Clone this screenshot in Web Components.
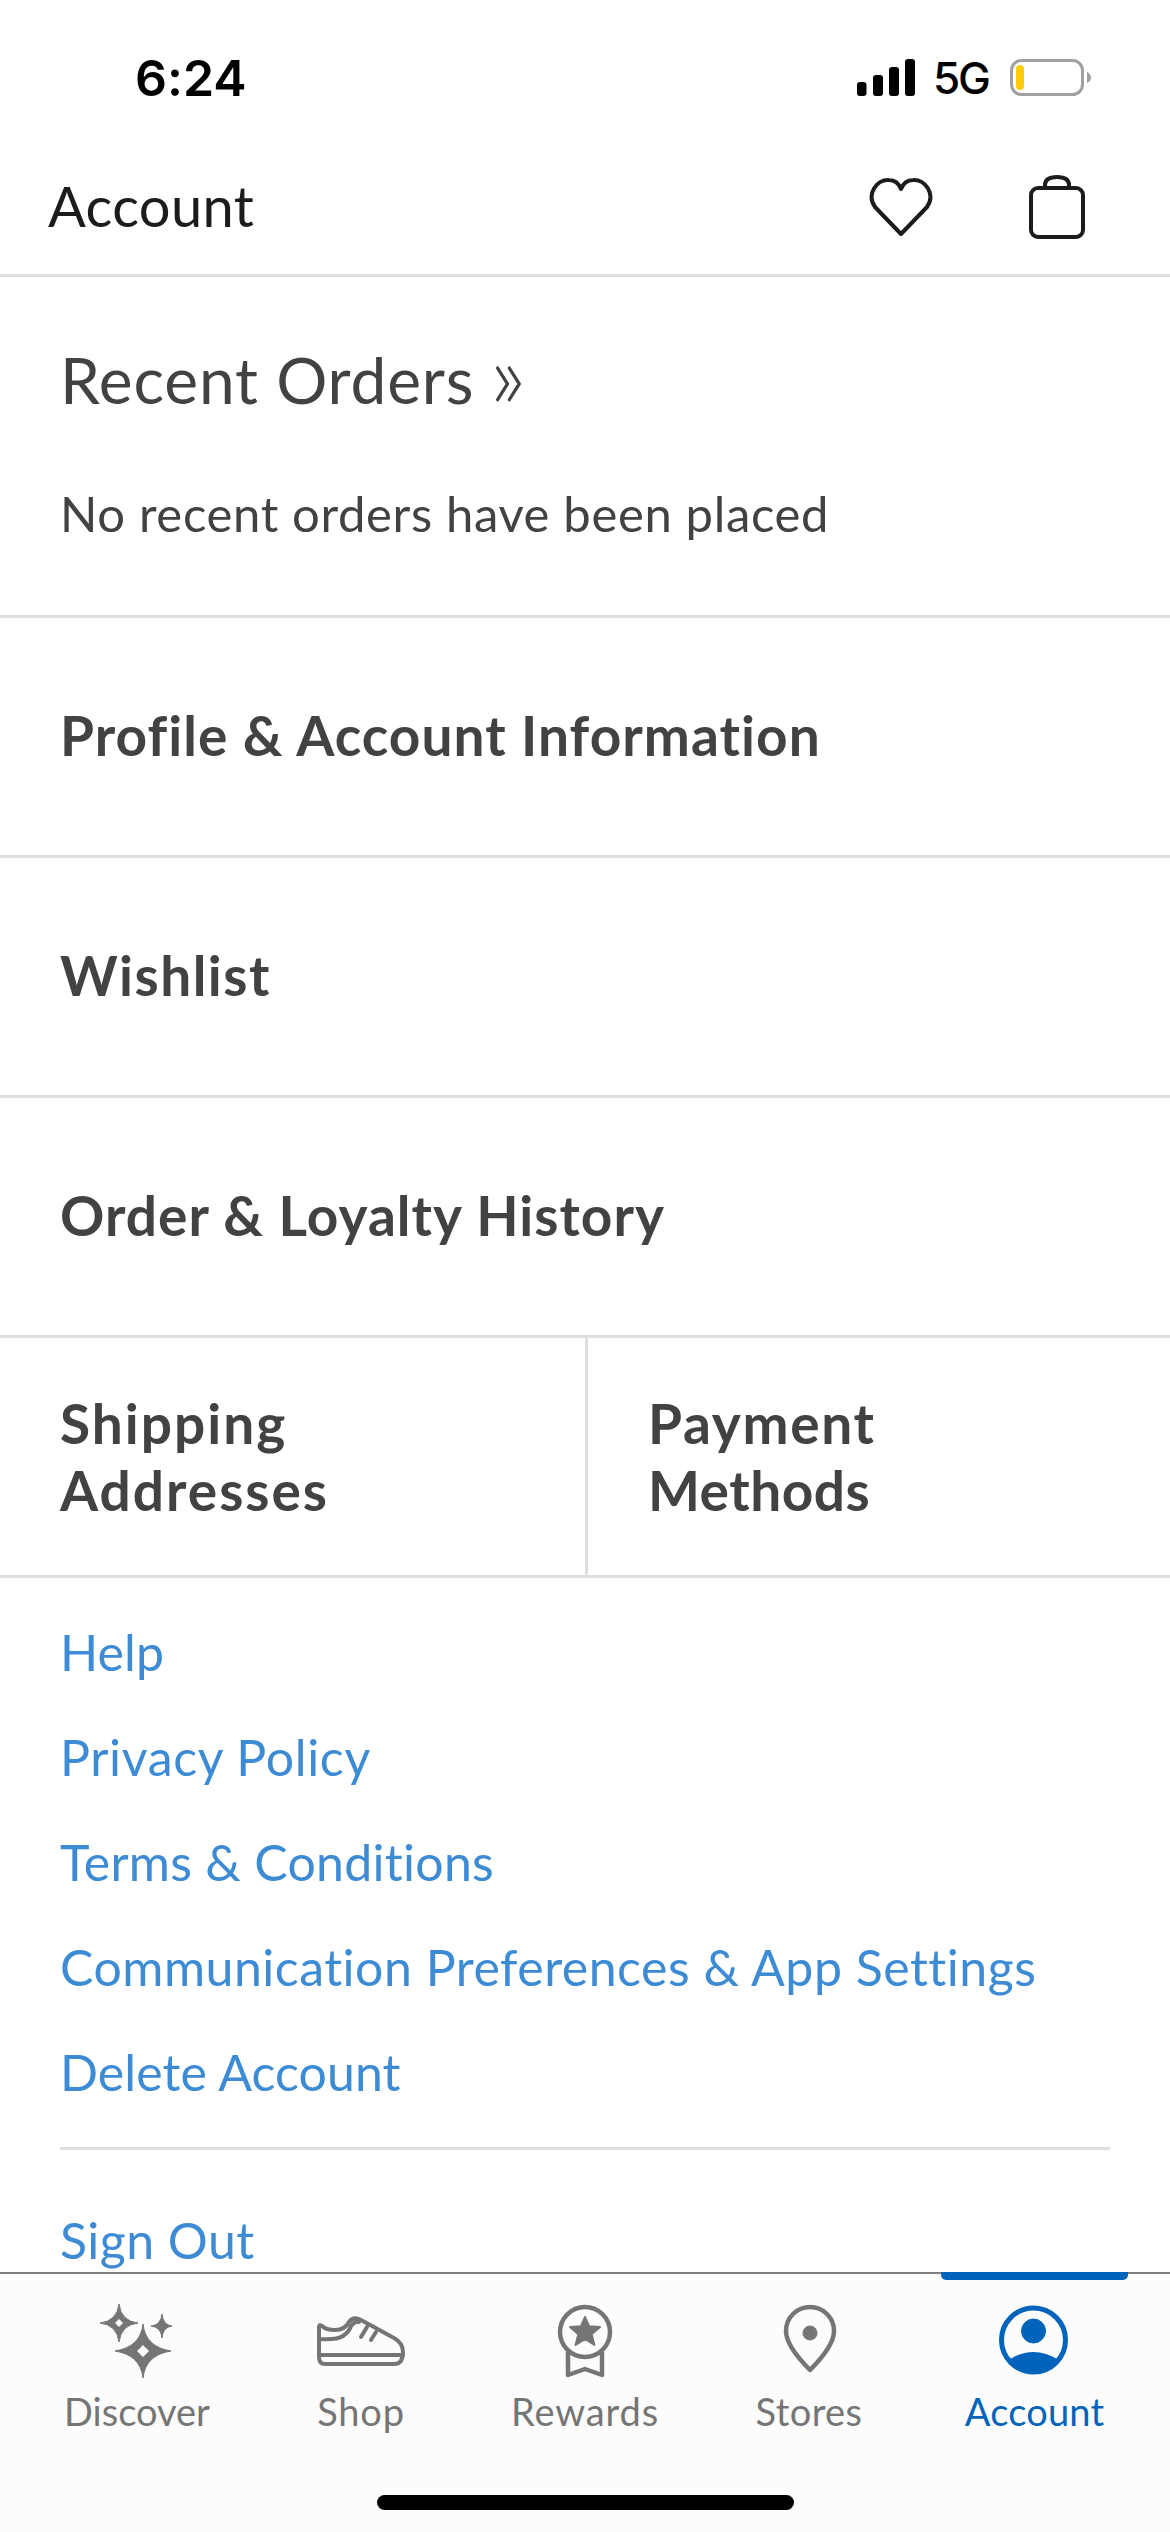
<!DOCTYPE html>
<html>
<head>
<meta charset="utf-8">
<title>Account</title>
<style>
    html, body { margin: 0; padding: 0; background: #fff; }
    body { width: 1170px; height: 2532px; overflow: hidden; font-family: Lato, "Noto Sans", sans-serif; font-variant-ligatures: none; color: #424242; }
</style>
</head>
<body>
<app-screen>
    <status-bar slot="top" time="6:24"></status-bar>
    <app-header slot="top" title="Account"></app-header>
    <recent-orders></recent-orders>
    <account-row>Profile &amp; Account Information</account-row>
    <account-row style="letter-spacing: 1.5px">Wishlist</account-row>
    <account-row>Order &amp; Loyalty History</account-row>
    <split-row>
        <span slot="left"><span style="letter-spacing: 2px">Shipping<br>Addresses</span></span>
        <span slot="right"><span style="letter-spacing: 1.7px">Payment</span><br><span style="letter-spacing: 0.5px">Methods</span></span>
    </split-row>
    <link-list>
        <a-link style="letter-spacing: 0.1px">Help</a-link>
        <a-link style="letter-spacing: 0.66px">Privacy Policy</a-link>
        <a-link style="letter-spacing: 0.28px">Terms &amp; Conditions</a-link>
        <a-link style="letter-spacing: 0.5px">Communication Preferences &amp; App Settings</a-link>
        <a-link style="letter-spacing: 0.1px">Delete Account</a-link>
        <a-link slot="after">Sign Out</a-link>
    </link-list>
    <tab-bar slot="bottom">
        <tab-item label="Discover" icon="discover" style="letter-spacing: 0"></tab-item>
        <tab-item label="Shop" icon="shop" style="letter-spacing: 0.8px"></tab-item>
        <tab-item label="Rewards" icon="rewards" style="letter-spacing: 0.9px"></tab-item>
        <tab-item label="Stores" icon="stores" style="letter-spacing: 0.4px"></tab-item>
        <tab-item label="Account" icon="account" active></tab-item>
    </tab-bar>
</app-screen>

<script>
(function () {

    const ICONS = {
        discover: '\
            <path d="M56 22Q58.500 45 84 49Q58.500 53 56 76Q53.500 53 28 49Q53.500 45 56 22Z"/>\
            <path d="M32 2Q34 19 51 21Q34 23 32 40Q30 23 13 21Q30 19 32 2Z"/>\
            <path d="M75 12Q76 23 85 24Q76 25 75 36Q74 25 64 24Q74 23 75 12Z"/>\
            <path fill="#fcfcfc" stroke="none" d="M56 43l6 6-6 6-6-6zM32 17l4 4-4 4-4-4z"/>',
        shop: '\
            <g fill="none" stroke-width="4" stroke-linecap="round" stroke-linejoin="round">\
            <path d="M8 25V55Q8 62 14 62H83Q92 62 92 50Q92 41 83 36L50 18Q42 14 38 20Q34 28 24 28Q15 28 11 24Q8 22 8 25Z"/>\
            <path d="M8 37Q26 38 32 34Q38 30 40 24Q44 19 48 20"/>\
            <path d="M8 53H92M50 35L56 25M60 38L65 30"/>\
            </g>',
        rewards: '\
            <g fill="none" stroke-width="4.500" stroke-linejoin="round">\
            <circle cx="50" cy="30" r="25"/>\
            <path d="M33 50V73L50 67L67 73V50"/>\
            </g>\
            <path stroke-width="2" stroke-linejoin="round" d="M50 15L54.100 24.300L65 25.100L56.700 32.200L59.400 42.900L50 37L40.600 42.900L43.300 32.200L35 25.100L45.900 24.300Z"/>',
        stores: '\
            <path fill="none" stroke-width="4.500" stroke-linejoin="round" d="M51 68Q27 44 27 29A24 24 0 0 1 75 29Q75 44 51 68Z"/>\
            <circle cx="51" cy="31" r="7"/>',
        account: '\
            <circle cx="50.500" cy="38" r="32" fill="none" stroke-width="5"/>\
            <circle cx="50.500" cy="29" r="12"/>\
            <path stroke="none" d="M25.500 58Q50.500 42 75.500 58A32 32 0 0 1 25.500 58Z"/>'
    };

    class AppScreen extends HTMLElement {
        constructor() {
            super();
            this.attachShadow({ mode: 'open' }).innerHTML = '\
            <style>\
                :host { display: flex; flex-direction: column; width: 1170px; height: 2532px; background: #fff; }\
                #content { flex: 1; min-height: 0; overflow: hidden; }\
            </style>\
            <slot name="top"></slot>\
            <div id="content"><slot></slot></div>\
            <slot name="bottom"></slot>';
        }
    }

    class StatusBar extends HTMLElement {
        constructor() {
            super();
            this.attachShadow({ mode: 'open' }).innerHTML = '\
            <style>\
                :host { display: flex; align-items: center; justify-content: space-between; height: 110px; padding: 45px 79px 0 135px; box-sizing: border-box; color: #000; font-family: Inter, sans-serif; }\
                #time { font-size: 50px; font-weight: 600; line-height: 66px; }\
                #right { display: flex; align-items: center; gap: 21px; height: 66px; }\
                #signal { margin-right: -3px; }\
                #net { font-size: 44px; font-weight: 500; line-height: 66px; letter-spacing: -2px; }\
                svg { display: block; }\
            </style>\
            <span id="time"></span>\
            <div id="right">\
                <svg id="signal" width="58" height="37" viewBox="0 0 58 37">\
                    <rect x="0" y="23" width="9.500" height="14" rx="3"/>\
                    <rect x="16" y="16" width="10" height="21" rx="3"/>\
                    <rect x="32" y="8" width="10" height="29" rx="3"/>\
                    <rect x="48" y="0" width="10" height="37" rx="3"/>\
                </svg>\
                <span id="net">5G</span>\
                <svg width="81" height="37" viewBox="0 0 81 37">\
                    <rect x="1.500" y="1.500" width="71" height="34" rx="10" fill="none" stroke="#a0a0a0" stroke-width="3"/>\
                    <rect x="6" y="6" width="8" height="25" rx="4" fill="#fecb0a"/>\
                    <path d="M77 13Q81 15 81 18.500Q81 22 77 24Z" fill="#a0a0a0"/>\
                </svg>\
            </div>';
            this.shadowRoot.querySelector('#time').textContent = this.getAttribute('time');
        }
    }

    class AppHeader extends HTMLElement {
        constructor() {
            super();
            this.attachShadow({ mode: 'open' }).innerHTML = '\
            <style>\
                :host { display: flex; align-items: center; height: 167px; padding: 30px 85px 0 48px; box-sizing: border-box; border-bottom: 3px solid #dedede; color: #1c1c1c; }\
                #title { flex: 1; font-size: 56px; letter-spacing: 0.4px; margin-top: -3px; }\
                #icons { display: flex; align-items: center; gap: 96px; }\
                svg { display: block; fill: none; stroke: #1c1c1c; stroke-width: 4; stroke-linejoin: round; }\
            </style>\
            <span id="title"></span>\
            <div id="icons">\
                <svg width="64" height="60" viewBox="0 0 64 60"><path d="M32 57L6 30C-3 17 8 2 20 3C26 3 30 7 32 12C34 7 38 3 44 3C56 2 67 17 58 30Z"/></svg>\
                <svg width="56" height="64" viewBox="0 0 56 64"><rect x="2" y="13" width="52" height="49" rx="7"/><path d="M16 12V10C16 5 20 2 28 2C36 2 40 5 40 10V12"/></svg>\
            </div>';
            this.shadowRoot.querySelector('#title').textContent = this.getAttribute('title');
        }
    }

    class RecentOrders extends HTMLElement {
        constructor() {
            super();
            this.attachShadow({ mode: 'open' }).innerHTML = '\
            <style>\
                :host { display: flex; flex-direction: column; height: 341px; padding: 63px 60px 0; box-sizing: border-box; border-bottom: 3px solid #dedede; }\
                h2 { margin: 0; font-size: 64px; font-weight: 400; line-height: 80px; letter-spacing: 0.85px; }\
                h2 span { font-size: 92px; font-weight: 300; line-height: 60px; vertical-align: -4px; margin-left: -2px; }\
                p { margin: 63px 0 0; font-size: 49px; line-height: 60px; letter-spacing: 0.64px; }\
            </style>\
            <h2>Recent Orders <span>»</span></h2>\
            <p>No recent orders have been placed</p>';
        }
    }

    class AccountRow extends HTMLElement {
        constructor() {
            super();
            this.attachShadow({ mode: 'open' }).innerHTML = '\
            <style>\
                :host { display: flex; align-items: center; height: 240px; padding: 0 60px 3px; box-sizing: border-box; border-bottom: 3px solid #dedede; font-size: 55px; font-weight: 700; letter-spacing: 1.05px; }\
            </style>\
            <slot></slot>';
        }
    }

    class SplitRow extends HTMLElement {
        constructor() {
            super();
            this.attachShadow({ mode: 'open' }).innerHTML = '\
            <style>\
                :host { display: grid; grid-template-columns: 585px 1fr; height: 240px; box-sizing: border-box; border-bottom: 3px solid #dedede; font-size: 55px; font-weight: 700; line-height: 67px; }\
                div { display: flex; align-items: center; padding-left: 60px; box-sizing: border-box; }\
                div + div { border-left: 3px solid #dedede; }\
            </style>\
            <div><slot name="left"></slot></div>\
            <div><slot name="right"></slot></div>';
        }
    }

    class LinkList extends HTMLElement {
        constructor() {
            super();
            this.attachShadow({ mode: 'open' }).innerHTML = '\
            <style>\
                :host { display: block; padding: 22px 60px 0; }\
                #links { display: flex; flex-direction: column; padding-bottom: 22px; border-bottom: 3px solid #dedede; margin-bottom: 38px; }\
            </style>\
            <div id="links"><slot></slot></div>\
            <slot name="after"></slot>';
        }
    }

    class ALink extends HTMLElement {
        constructor() {
            super();
            this.attachShadow({ mode: 'open' }).innerHTML = '\
            <style>\
                :host { display: block; height: 105px; font-size: 50px; line-height: 105px; letter-spacing: 0.45px; color: #3d8bd4; white-space: nowrap; }\
            </style>\
            <slot></slot>';
        }
    }

    class TabBar extends HTMLElement {
        constructor() {
            super();
            this.attachShadow({ mode: 'open' }).innerHTML = '\
            <style>\
                :host { display: grid; grid-template-columns: repeat(5, 224px); height: 260px; padding: 0 25px; box-sizing: border-box; background: #fcfcfc; border-top: 2px solid #7f7f7f; position: relative; }\
                #home { position: absolute; left: 377px; top: 221px; width: 417px; height: 15px; border-radius: 8px; background: #000; }\
            </style>\
            <slot></slot>\
            <div id="home"></div>';
        }
    }

    class TabItem extends HTMLElement {
        constructor() {
            super();
            let active = this.hasAttribute('active');
            this.attachShadow({ mode: 'open' }).innerHTML = '\
            <style>\
                :host { display: flex; flex-direction: column; align-items: center; padding-top: 28px; position: relative; font-size: 38px; letter-spacing: 0.2px; color: ' + (active ? '#0263bb' : '#757575') + '; }\
                svg { display: block; fill: currentColor; stroke: currentColor; }\
                #label { margin-top: 10px; line-height: 46px; ' + (active ? 'margin-left: 3px;' : '') + ' }\
                #bar { position: absolute; left: 20px; right: 17px; top: -2px; height: 8px; background: #0263bb; border-radius: 0 0 5px 5px; }\
            </style>\
            ' + (active ? '<div id="bar"></div>' : '') + '\
            <svg width="100" height="76" viewBox="0 0 100 76">' + ICONS[this.getAttribute('icon')] + '</svg>\
            <span id="label"></span>';
            this.shadowRoot.querySelector('#label').textContent = this.getAttribute('label');
        }
    }

    customElements.define('app-screen', AppScreen);
    customElements.define('status-bar', StatusBar);
    customElements.define('app-header', AppHeader);
    customElements.define('recent-orders', RecentOrders);
    customElements.define('account-row', AccountRow);
    customElements.define('split-row', SplitRow);
    customElements.define('link-list', LinkList);
    customElements.define('a-link', ALink);
    customElements.define('tab-bar', TabBar);
    customElements.define('tab-item', TabItem);

})();
</script>
</body>
</html>
